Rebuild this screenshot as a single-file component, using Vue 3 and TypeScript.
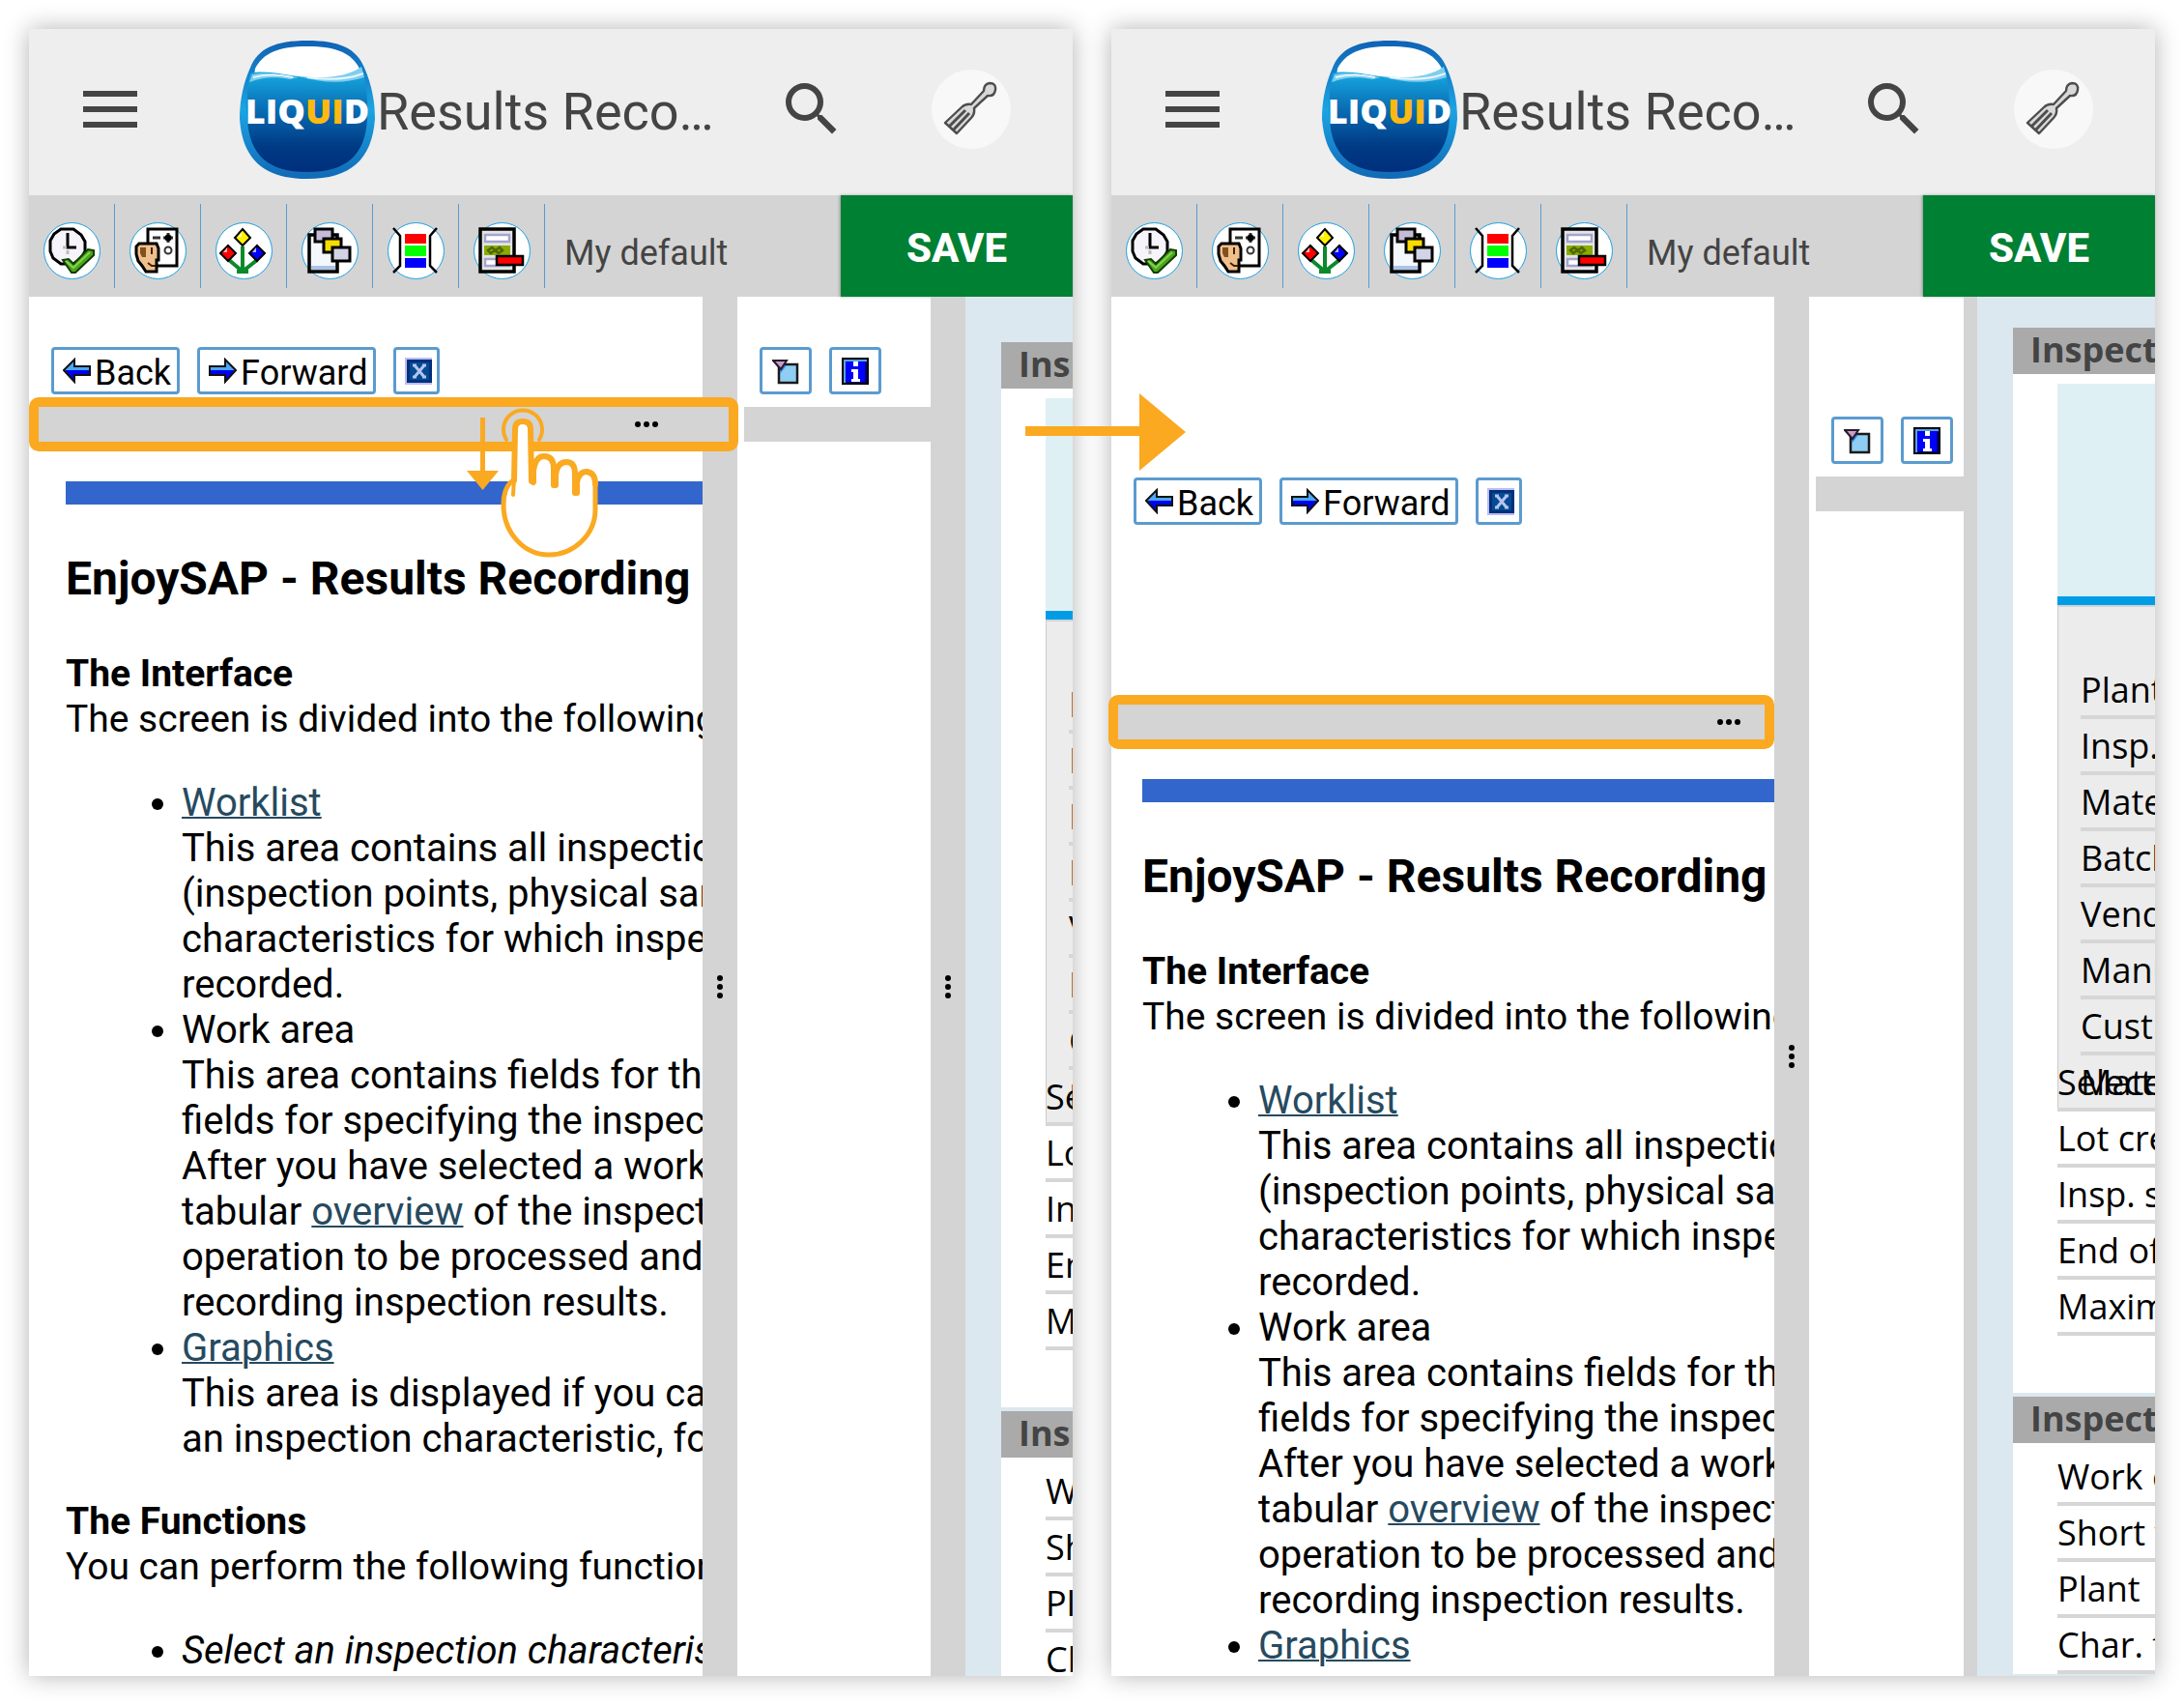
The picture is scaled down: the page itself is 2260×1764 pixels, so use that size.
<script setup lang="ts">
interface Screen {
  id: string
  state: 'compact' | 'expanded'
}

interface ToolItem {
  name: string
  label: string
}

const screens: Screen[] = [
  { id: 'before', state: 'compact' },
  { id: 'after', state: 'expanded' },
]

const tools: ToolItem[] = [
  { name: 'clock', label: 'Execute' },
  { name: 'person', label: 'Valuate' },
  { name: 'flower', label: 'Characteristics' },
  { name: 'copies', label: 'Copy' },
  { name: 'colors', label: 'Legend' },
  { name: 'remove', label: 'Remove' },
]

const objectRows: string[] = ['Plant', 'Insp. lot', 'Material', 'Batch', 'Vendor', 'Manufacturer', 'Cust. no.', 'Material']
const lotRows: string[] = ['Selected', 'Lot created', 'Insp. start', 'End of insp.', 'Maximum']
const operationRows: string[] = ['Work center', 'Short text', 'Plant', 'Char. filter']
</script>

<template>
  <main class="page">
    <section v-for="screen in screens" :key="screen.id" class="screen" :class="screen.state">
      <header class="topbar">
        <button class="plain menu" type="button" aria-label="Menu">
          <i></i><i></i><i></i>
        </button>
        <svg class="logo" viewBox="0 0 140 144" role="img" aria-label="Liquid UI">
          <defs>
            <linearGradient :id="screen.id + '-water'" x1="0" y1="0" x2="0" y2="1">
              <stop offset="0" stop-color="#18aee4" />
              <stop offset="0.35" stop-color="#0a72b8" />
              <stop offset="0.75" stop-color="#003a85" />
              <stop offset="1" stop-color="#002f7c" />
            </linearGradient>
            <linearGradient :id="screen.id + '-rim'" x1="0" y1="0" x2="0" y2="1">
              <stop offset="0" stop-color="#0f62b4" />
              <stop offset="0.5" stop-color="#1ba4e2" />
              <stop offset="1" stop-color="#1169b6" />
            </linearGradient>
          </defs>
          <path :fill="'url(#' + screen.id + '-rim)'" d="M70 1C103 1 121 9 129 29C137 47 140 65 140 82C137 124 115 144 70 144C25 144 3 124 0 82C0 65 3 47 11 29C19 9 37 1 70 1Z" />
          <path fill="#fff" d="M70 7C100 7 116 14 124 30L126 46H14L16 30C24 14 40 7 70 7Z" />
          <path :fill="'url(#' + screen.id + '-water)'" d="M11 35C25 31 44 36 61 38C84 41 108 40 127 31C131 48 133 64 132 82C130 120 110 137 70 137C30 137 10 120 8 82C7 64 8 48 11 35Z" />
          <path fill="#7fcdf0" d="M13 36C30 32 48 38 61 39L52 41C36 38 23 39 10 44ZM62 38C90 41 112 38 126 28L129 39C108 46 85 45 62 38Z" />
          <path fill="none" stroke="#e7f5fb" stroke-width="2" d="M14 39Q33 34 55 39M70 39Q104 44 128 35" />
          <text x="70" y="87" text-anchor="middle" class="logo-text">LIQ<tspan fill="#fdb913">UI</tspan>D</text>
        </svg>
        <h1 class="title">Results Reco…</h1>
        <button class="plain" type="button" aria-label="Search">
          <svg class="search" viewBox="0 0 24 24">
            <path fill="#444" d="M15.5 14h-.79l-.28-.27A6.47 6.47 0 0 0 16 9.5 6.5 6.5 0 1 0 9.5 16c1.61 0 3.09-.59 4.23-1.57l.27.28v.79l5 4.99L20.49 19l-4.99-5zm-6 0a4.5 4.5 0 1 1 0-9 4.5 4.5 0 0 1 0 9z" />
          </svg>
        </button>
        <button class="plain spatula" type="button" aria-label="Customize">
          <svg viewBox="0 0 82 82">
            <g fill="#d9d9d9" stroke="#4d4d4d" stroke-width="2.4" stroke-linejoin="round">
              <path d="M14 55L31 39Q35 35 41 36L54 22Q54 15 60 14Q67 14 66 21Q65 28 58 27L44 40Q45 46 41 50L26 66Z" />
              <path fill="none" d="M18 59L35 42M22 63L39 45" stroke-width="3" />
            </g>
          </svg>
        </button>
      </header>

      <nav class="toolbar" aria-label="Application toolbar">
        <button v-for="tool in tools" :key="tool.name" class="plain tool" type="button" :aria-label="tool.label">
          <span class="disc">
            <svg v-if="tool.name === 'clock'" viewBox="0 0 48 48">
              <path fill="#f6f3fa" stroke="#000" stroke-width="3" d="M13 2H26L34 8L38 15V25L34 32L26 38H13L5 32L2 25V14L6 7Z" />
              <path fill="none" stroke="#000" stroke-width="3" d="M20 6V21H29" />
              <path stroke="#bbb" stroke-width="3" d="M15 21H19M20 24V28" />
              <path fill="#4aa51c" stroke="#123d06" stroke-width="2" d="M15 34L21 33L26 38L41 23L47 24V29L28 47H24Z" />
              <path fill="none" stroke="#86d44a" stroke-width="2" d="M18 35L26 42L43 26" />
            </svg>
            <svg v-else-if="tool.name === 'person'" viewBox="0 0 48 48">
              <path fill="#fff" stroke="#000" stroke-width="3" d="M14 2H44V40H14Z" />
              <path fill="none" stroke="#333" stroke-width="3" d="M19 11H27M30 11H40M35 6V16" />
              <circle cx="35" cy="11" r="3.5" fill="#000" />
              <circle cx="35" cy="24" r="3.5" fill="none" stroke="#333" stroke-width="2" />
              <path fill="#f0c08c" stroke="#000" stroke-width="3" d="M5 17H23L25 22V34H23V46H12L8 40L4 35L2 28V20Z" />
              <path fill="#80501f" d="M6 21H12V31H8L6 27Z" />
              <path fill="none" stroke="#40210a" stroke-width="2" d="M18 21V28M14 37L18 40H22" />
            </svg>
            <svg v-else-if="tool.name === 'flower'" viewBox="0 0 48 48">
              <path fill="none" stroke="#0a8a2a" stroke-width="4" d="M23 20V46M9 34L22 45M38 34L24 45M17 46H29" />
              <g stroke="#000" stroke-width="2">
                <path fill="#fff200" d="M23 2L31 11L23 19L15 11Z" />
                <path fill="#f00" d="M8 19L16 27L8 35L0 27Z" />
                <path fill="#00f" d="M38 19L46 27L38 35L30 27Z" />
              </g>
              <path fill="#fff" d="M18 10L22 5V10ZM3 26L7 21V26ZM33 26L37 21V26Z" opacity="0.7" />
            </svg>
            <svg v-else-if="tool.name === 'copies'" viewBox="0 0 48 48">
              <path fill="#f4f7fb" stroke="#000" stroke-width="3.5" d="M3 8H32V46H3Z" />
              <path fill="#a9c4e6" d="M5 40H30V44H5Z" />
              <g stroke="#000" stroke-width="3">
                <path fill="#c5bbd6" d="M9 2H27V15H9Z" />
                <path fill="#f8dc00" d="M18 12H36V26H18Z" />
                <path fill="#d3d3e6" d="M27 21H45V35H27Z" />
              </g>
            </svg>
            <svg v-else-if="tool.name === 'colors'" viewBox="0 0 48 48">
              <path fill="none" stroke="#000" stroke-width="2.5" d="M1 1L8 9V40L1 47M46 1L39 9V40L46 47" />
              <path fill="#f00" d="M13 7H35V17H13Z" />
              <path fill="#0f0" d="M13 19H35V30H13Z" />
              <path fill="#00f" d="M13 32H35V42H13Z" />
            </svg>
            <svg v-else viewBox="0 0 48 48">
              <path fill="#e4e4e4" stroke="#000" stroke-width="3.5" d="M2 2H37V46H2Z" />
              <path fill="#fff" stroke="#a4a4cf" stroke-width="2.5" d="M7 8H32V15H7ZM7 33H32V40H7Z" />
              <path fill="#8aac00" d="M6 19H33V29H6Z" />
              <path fill="none" stroke="#4f6800" stroke-width="2.5" d="M10 24L14 21L18 24L22 21L25 24L21 27L17 24L13 27Z" />
              <path fill="#f00" stroke="#000" stroke-width="2.5" d="M19 30H46V39H19Z" />
            </svg>
          </span>
        </button>
        <span class="variant">My default</span>
        <button class="save" type="button">SAVE</button>
      </nav>

      <div class="workspace">
        <div class="pane help">
          <div class="buttons">
            <button class="boxed" type="button">
              <svg class="arrow" viewBox="0 0 29 27">
                <path fill="#4aa8f8" d="M2 13L12 2V9H28V13Z" />
                <path fill="#0000f0" d="M2 13H28V18H12V25Z" />
                <path fill="none" stroke="#111" stroke-width="2" d="M1 13L12 2V9H28V18H12V25Z" />
              </svg>Back
            </button>
            <button class="boxed" type="button">
              <svg class="arrow" viewBox="0 0 29 27">
                <path fill="#4aa8f8" d="M27 13L17 2V9H1V13Z" />
                <path fill="#0000f0" d="M27 13H1V18H17V25Z" />
                <path fill="none" stroke="#111" stroke-width="2" d="M28 13L17 2V9H1V18H17V25Z" />
              </svg>Forward
            </button>
            <button class="boxed close" type="button" aria-label="Close">
              <svg viewBox="0 0 28 28">
                <path fill="#bcbcf4" d="M0 0H28V28H0Z" />
                <path fill="#00307c" d="M2 2H28V26H2Z" />
                <path fill="#064a92" d="M5 5H25V23H5Z" />
                <path fill="none" stroke="#b4c4f0" stroke-width="3" d="M10 8L20 20M20 8L10 20M8 8H12M18 8H22M8 20H12M18 20H22" />
              </svg>
            </button>
          </div>

          <div class="bar" role="separator" aria-orientation="horizontal">
            <svg class="dots" viewBox="0 0 26 8"><circle cx="4" cy="4" r="3" /><circle cx="13" cy="4" r="3" /><circle cx="22" cy="4" r="3" /></svg>
            <span class="highlight"></span>
            <svg v-if="screen.state === 'compact'" class="gesture" viewBox="0 0 150 165" aria-hidden="true">
              <path fill="#faa921" d="M17 17H22V72H36L19.500 92L3 72H17Z" />
              <path fill="none" stroke="#faa921" stroke-width="4" stroke-linecap="round" d="M44 40A20 20 0 1 1 78 40" />
              <path fill="#fff" d="M51 97L53 29Q53 21 61 21Q69 21 69 29L71 80Q72 57 83 57Q93 57 94 75Q96 63 106 63Q115 63 116 78Q118 73 126 73Q136 74 136 86V112C136 138 114 159 88 159C60 159 41 136 41 107Q41 90 51 82Z" />
              <g fill="none" stroke="#faa921" stroke-linecap="round" stroke-linejoin="round">
                <path stroke-width="4" d="M51 97L52 80" />
                <path stroke-width="6" d="M52 82L53 29Q53 21 61 21Q69 21 69 29L70 83L72 84V72Q74 57 83 57Q93 57 93 70V87H95V76Q97 63 106 63Q115 63 115 75V95H117V84Q119 73 127 73Q136 74 136 86" />
                <path stroke-width="5" d="M51 82Q41 89 41 107C41 136 62 159 88 159C114 159 136 138 136 112V86" />
              </g>
            </svg>
          </div>

          <article class="doc">
            <div class="rule"></div>
            <h2>EnjoySAP - Results Recording</h2>
            <h3>The Interface</h3>
            <p>The screen is divided into the following areas:</p>
            <ul>
              <li>
                <a href="#worklist">Worklist</a><br />
                This area contains all inspection lots<br />
                (inspection points, physical samples) and<br />
                characteristics for which inspection results are<br />
                recorded.
              </li>
              <li>
                Work area<br />
                This area contains fields for the inspection lot and<br />
                fields for specifying the inspection.<br />
                After you have selected a worklist entry, a<br />
                tabular <a href="#overview">overview</a> of the inspection<br />
                operation to be processed and fields for<br />
                recording inspection results.
              </li>
              <li>
                <a href="#graphics">Graphics</a><br />
                This area is displayed if you call up<br />
                an inspection characteristic, for example.
              </li>
            </ul>
            <h3>The Functions</h3>
            <p>You can perform the following functions:</p>
            <ul>
              <li><em>Select an inspection characteristic</em></li>
            </ul>
          </article>
        </div>

        <div class="splitter" role="separator" aria-orientation="vertical">
          <svg class="grip" viewBox="0 0 8 26"><circle cx="4" cy="4" r="3" /><circle cx="4" cy="13" r="3" /><circle cx="4" cy="22" r="3" /></svg>
        </div>

        <div class="pane tree">
          <div class="buttons">
            <button class="boxed icon" type="button" aria-label="Filter">
              <svg viewBox="0 0 28 28">
                <path fill="#8fcdf2" stroke="#1a1a1a" stroke-width="2.500" d="M7 7H26V26H7Z" />
                <path fill="#2a8df0" d="M8 8H15L8 17Z" />
                <path fill="#c79fcb" stroke="#2b1a2b" stroke-width="2" d="M1 3H15L9 12Z" />
              </svg>
            </button>
            <button class="boxed icon" type="button" aria-label="Information">
              <svg viewBox="0 0 28 28">
                <path fill="#00f" stroke="#000" stroke-width="2" d="M1 1H27V27H1Z" />
                <path fill="#5ba3d6" d="M2 2H26V4H4V26H2Z" />
                <path fill="#000080" d="M24 5H26V26H5V25H24Z" />
                <path fill="#fff" d="M12 4H17V9H12ZM10 12H17V22H19V25H10V22H12V15H10Z" />
              </svg>
            </button>
          </div>
          <div class="bar" role="separator" aria-orientation="horizontal"></div>
        </div>

        <div class="splitter second" role="separator" aria-orientation="vertical">
          <svg v-if="screen.state === 'compact'" class="grip" viewBox="0 0 8 26"><circle cx="4" cy="4" r="3" /><circle cx="4" cy="13" r="3" /><circle cx="4" cy="22" r="3" /></svg>
        </div>

        <div class="details">
          <section class="group first">
            <h4>Inspection lot</h4>
            <div class="fields">
              <div class="tab"></div>
              <div class="object">
                <div v-for="(row, index) in objectRows" :key="index" class="row">{{ row }}</div>
              </div>
              <div class="lots">
                <div v-for="row in lotRows" :key="row" class="row">{{ row }}</div>
              </div>
            </div>
          </section>
          <section class="group">
            <h4>Inspection operation</h4>
            <div class="fields">
              <div v-for="row in operationRows" :key="row" class="row">{{ row }}</div>
            </div>
          </section>
        </div>
      </div>
    </section>

    <svg class="step" viewBox="0 0 166 80" aria-hidden="true">
      <path fill="#faa921" d="M0 34H118V0L166 40L118 80V44H0Z" />
    </svg>
  </main>
</template>

<style>
body {
  margin: 0;
  background: #fff;
}
</style>

<style scoped>
.page {
  position: relative;
  box-sizing: border-box;
  display: grid;
  grid-template-columns: minmax(0, 1fr) minmax(0, 1fr);
  grid-template-rows: minmax(0, 1fr);
  gap: 40px;
  height: 100vh;
  padding: 30px;
  overflow: hidden;
  font-family: Roboto, "Liberation Sans", sans-serif;
  color: #000;
}
.screen {
  display: flex;
  flex-direction: column;
  min-height: 0;
  background: #fff;
  box-shadow: 0 0 24px rgba(0, 0, 0, 0.3);
}
.step {
  position: absolute;
  z-index: 4;
  top: 407px;
  left: calc(50% - 69px);
  width: 166px;
  height: 80px;
}
button {
  font-family: inherit;
  cursor: pointer;
}
.plain {
  padding: 0;
  border: 0;
  background: none;
}
svg {
  display: block;
}

.topbar {
  box-sizing: border-box;
  display: flex;
  align-items: center;
  flex: none;
  height: 172px;
  padding: 0 64px 6px 56px;
  background: #eee;
}
.menu {
  display: flex;
  flex-direction: column;
  gap: 10px;
  width: 56px;
}
.menu i {
  height: 6px;
  background: #444;
}
.logo {
  width: 140px;
  height: 144px;
  margin-left: 106px;
}
.logo-text {
  font: 800 36px "Open Sans", sans-serif;
  fill: #fff;
}
.title {
  flex: 1;
  margin: 0;
  padding: 6px 0 0 2px;
  font-size: 54px;
  font-weight: 400;
  line-height: 64px;
  color: #444;
  white-space: nowrap;
}
.search {
  width: 72px;
  height: 72px;
}
.spatula {
  width: 82px;
  height: 82px;
  margin-left: 88px;
  border-radius: 50%;
  background: #f8f8f8;
}

.toolbar {
  display: flex;
  align-items: center;
  flex: none;
  height: 105px;
  background: #d4d4d4;
}
.tool {
  box-sizing: border-box;
  display: flex;
  align-items: center;
  justify-content: center;
  width: 89px;
  height: 87px;
  padding-top: 10px;
  border-right: 1px solid #5b9bcf;
}
.disc {
  box-sizing: border-box;
  width: 59px;
  height: 59px;
  padding: 4px;
  border: 1px solid #1ba1e2;
  border-radius: 50%;
  background: #fff;
}
.disc svg {
  width: 48px;
  height: 48px;
  overflow: visible;
}
.variant {
  flex: 1;
  padding: 14px 0 0 20px;
  font-size: 36px;
  line-height: 42px;
  color: #444;
}
.save {
  align-self: stretch;
  width: 240px;
  padding: 4px 0 0;
  border: 0;
  background: #008033;
  box-shadow: -1px 0 3px rgba(0, 0, 0, 0.3);
  font-size: 42px;
  font-weight: 800;
  color: #fff;
}

.workspace {
  display: grid;
  grid-template-rows: minmax(0, 1fr);
  flex: 1;
  min-height: 0;
}
.compact .workspace {
  grid-template-columns: minmax(0, 697fr) 36px minmax(0, 200fr) 36px minmax(0, 111fr);
}
.expanded .workspace {
  grid-template-columns: minmax(0, 686fr) 36px minmax(0, 160fr) 14px minmax(0, 184fr);
}
.pane {
  display: flex;
  flex-direction: column;
  min-height: 0;
}
.buttons {
  display: flex;
  gap: 18px;
  padding: 52px 0 13px 23px;
}
.expanded .help .buttons {
  padding-top: 187px;
  padding-bottom: 186px;
}
.expanded .tree .buttons {
  padding-top: 124px;
}
.boxed {
  box-sizing: border-box;
  display: flex;
  align-items: center;
  gap: 4px;
  height: 49px;
  padding: 4px 6px 0 9px;
  border: 3px solid #5b9bcf;
  border-radius: 4px;
  background: #fff;
  font-size: 36px;
  line-height: 42px;
  color: #000;
}
.boxed svg {
  flex: none;
  width: 28px;
  height: 28px;
}
.boxed .arrow {
  width: 29px;
  height: 27px;
  margin-bottom: 4px;
}
.close {
  width: 48px;
  padding-top: 0;
}
.icon {
  justify-content: center;
  width: 54px;
  padding: 0;
}
.bar {
  position: relative;
  display: flex;
  align-items: center;
  justify-content: flex-end;
  flex: none;
  height: 36px;
  background: #d4d4d4;
}
.tree .bar {
  margin-left: 7px;
}
.dots {
  width: 26px;
  height: 8px;
  margin-right: 45px;
}
.expanded .dots {
  margin-right: 34px;
}
.highlight {
  position: absolute;
  z-index: 2;
  inset: -10px -37px -10px 0;
  border: 10px solid #faa921;
  border-radius: 10px;
}
.expanded .highlight {
  inset: -10px 0 -10px -3px;
}
.gesture {
  position: absolute;
  z-index: 3;
  top: -6px;
  left: 450px;
  width: 150px;
  height: 165px;
}

.doc {
  flex: 1;
  min-height: 0;
  padding: 41px 0 0 38px;
  overflow: hidden;
  font-size: 39px;
  line-height: 47px;
  white-space: nowrap;
}
.expanded .doc {
  margin-bottom: 6px;
  padding-left: 32px;
}
.rule {
  height: 24px;
  background: #36c;
}
.doc h2 {
  margin: 49px 0 47px;
  font-size: 48px;
  line-height: 56px;
}
.doc h3,
.doc p {
  margin: 0;
  font-size: inherit;
}
.doc ul {
  margin: 39px 0;
  padding-left: 120px;
  font-size: 40px;
}
.doc a {
  color: #264a60;
  text-decoration-thickness: 2px;
}

.splitter {
  display: flex;
  align-items: center;
  justify-content: center;
  background: #d4d4d4;
}
.expanded .splitter {
  padding-top: 144px;
}
.grip {
  width: 8px;
  height: 26px;
}

.details {
  min-height: 0;
  padding: 47px 0 0 37px;
  overflow: hidden;
  background: #dce8f0;
  font-family: "Open Sans", "Noto Sans", sans-serif;
  font-size: 36px;
  white-space: nowrap;
}
.expanded .details {
  padding-top: 32px;
}
.group {
  background: #fff;
}
.first {
  margin-bottom: 4px;
  padding-bottom: 59px;
}
.group h4 {
  height: 48px;
  margin: 0;
  padding-left: 18px;
  background: #aaa;
  font-size: 36px;
  line-height: 46px;
  color: #444;
}
.fields {
  padding: 7px 0 0 46px;
}
.first .fields {
  padding-top: 10px;
}
.tab {
  height: 220px;
  border-bottom: 9px solid #009de6;
  background: #def0f4;
}
.object {
  padding: 58px 0 0 23px;
  border-top: 2px solid #d4d4d4;
  border-left: 1px solid #ccc;
  background: #ececec;
}
.lots {
  margin-top: -58px;
}
.row {
  box-sizing: border-box;
  height: 58px;
  border-bottom: 4px solid #d6d6d6;
  line-height: 56px;
}
</style>
